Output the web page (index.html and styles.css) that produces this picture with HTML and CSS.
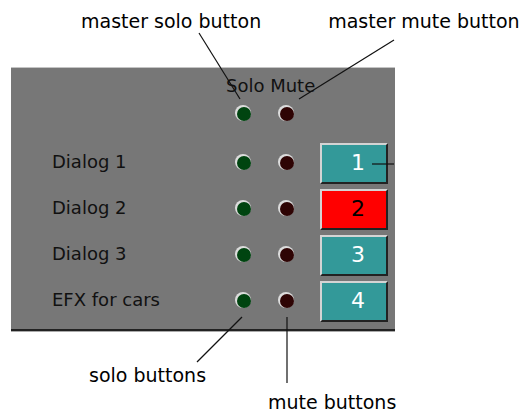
FILE: index.html
```html
<!DOCTYPE html>
<html lang="en">
<head>
    <meta charset="UTF-8">
    <meta name="viewport" content="width=device-width, initial-scale=1.0">
    <title>Mixer Channels</title>
    <link rel="stylesheet" href="styles.css">
</head>
<body>
    <div class="callouts-top">
        <span class="note note-solo">master solo button</span>
        <span class="note note-mute">master mute button</span>
    </div>

    <div class="panel">
        <div class="panel-head">Solo Mute</div>

        <div class="master-row">
            <span class="dot solo"></span>
            <span class="dot mute"></span>
        </div>

        <div class="row">
            <span class="label">Dialog 1</span>
            <span class="dot solo"></span>
            <span class="dot mute"></span>
            <button class="chan">1</button>
        </div>
        <div class="row">
            <span class="label">Dialog 2</span>
            <span class="dot solo"></span>
            <span class="dot mute"></span>
            <button class="chan active">2</button>
        </div>
        <div class="row">
            <span class="label">Dialog 3</span>
            <span class="dot solo"></span>
            <span class="dot mute"></span>
            <button class="chan">3</button>
        </div>
        <div class="row">
            <span class="label">EFX for cars</span>
            <span class="dot solo"></span>
            <span class="dot mute"></span>
            <button class="chan">4</button>
        </div>
    </div>

    <div class="callouts-bottom">
        <div class="note note-solos">solo buttons</div>
        <div class="note note-mutes">mute buttons</div>
    </div>

    <!-- leader lines drawn over the panel -->
    <svg class="leaders" width="520" height="412" viewBox="0 0 520 412">
        <path d="M199 33 L240 99" />
        <path d="M394 40 L299 99" />
        <path d="M372 164 L394 164" />
        <path d="M242 317 L197 362" />
        <path d="M287 317 L287 383" />
    </svg>
</body>
</html>
```

FILE: styles.css
```css
body {
    margin: 0;
    padding: 0;
    position: relative;
    width: 520px;
    height: 412px;
    background: #fff;
    font-family: "DejaVu Sans", Verdana, sans-serif;
    color: #000;
    overflow: hidden;
}
.note {
    font-size: 19px;
    line-height: 22px;
    white-space: nowrap;
}
.callouts-top {
    display: flex;
    height: 57px;
    padding: 10px 0 0 81px;
}
.note-mute {
    margin-left: 67px;
}
.panel {
    margin-left: 11px;
    width: 384px;
    padding: 0 0 5px 41px;
    box-sizing: border-box;
    background: #777;
    border-top: 1px solid #c4c4c4;
    border-bottom: 2px solid #222;
    box-shadow: 0 1px 0 #aaa;
    font-size: 18px;
}
.panel-head {
    padding: 8px 0 0 174px;
    line-height: 20px;
    height: 20px;
    color: #111;
}
.master-row {
    display: flex;
    align-items: flex-start;
    height: 44px;
    box-sizing: border-box;
    padding: 11px 0 0 185px;
}
.row {
    display: flex;
    align-items: center;
    height: 46px;
}
.label {
    width: 185px;
    color: #111;
    margin-top: -3px;
}
.dot {
    width: 14px;
    height: 14px;
    border-radius: 50%;
    box-shadow: -1px -1px 0 1px #dcdcdc;
}
.dot.solo {
    background: #004410;
}
.dot.mute {
    background: #2e0404;
    margin-left: 29px;
}
.chan {
    margin-left: 26px;
    width: 68px;
    height: 41px;
    box-sizing: border-box;
    padding: 0 0 0 8px;
    border: 2px solid;
    border-color: #d4d4d4 #222 #222 #d4d4d4;
    background: #339999;
    color: #fff;
    font-family: "DejaVu Sans", Verdana, sans-serif;
    font-size: 22px;
    line-height: 1;
    cursor: pointer;
}
.chan.active {
    background: #ff0000;
    color: #000;
}
.callouts-bottom {
    padding-top: 33px;
}
.note-solos {
    padding-left: 89px;
}
.note-mutes {
    margin-top: 5px;
    padding-left: 268px;
}
.leaders {
    position: absolute;
    top: 0;
    left: 0;
    pointer-events: none;
}
.leaders path {
    stroke: #111;
    stroke-width: 1.2;
    fill: none;
}
```
